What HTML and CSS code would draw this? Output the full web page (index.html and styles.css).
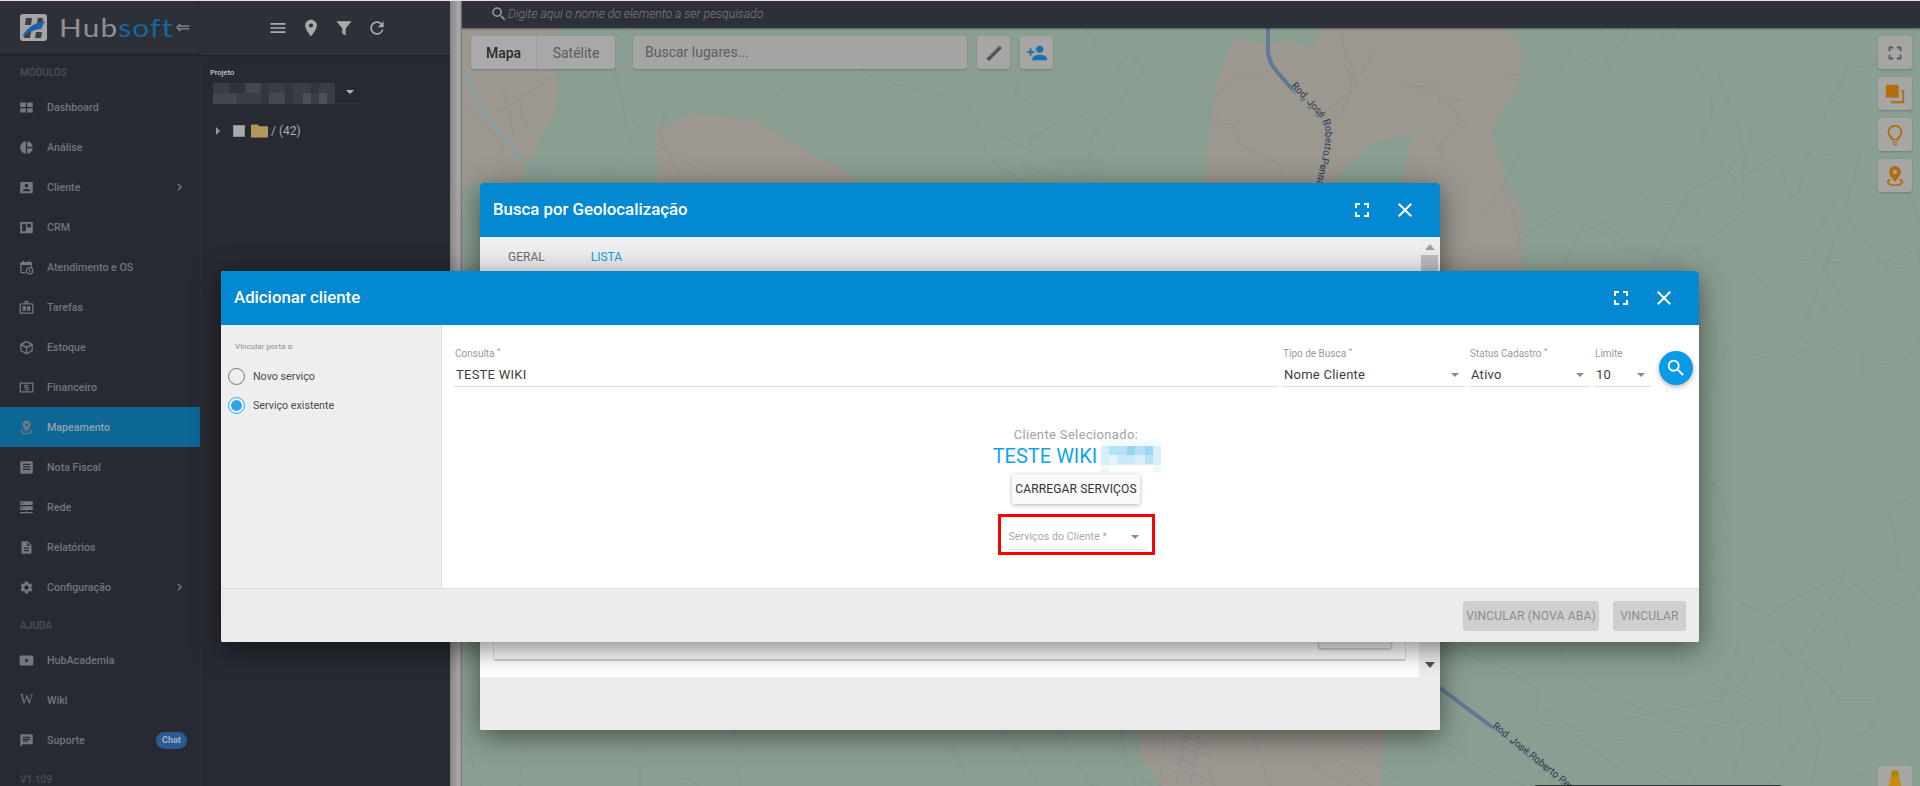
FILE: index.html
```html
<!DOCTYPE html>
<html lang="pt-BR">
<head>
<meta charset="utf-8">
<title>Hubsoft - Mapeamento</title>
<link rel="stylesheet" href="styles.css">
</head>
<body>
<svg class="defs" width="0" height="0" aria-hidden="true">
  <symbol id="i-menu" viewBox="0 0 24 24"><path d="M3 18h18v-2H3v2zm0-5h18v-2H3v2zm0-7v2h18V6H3z"/></symbol>
  <symbol id="i-place" viewBox="0 0 24 24"><path d="M12 2C8.130 2 5 5.130 5 9c0 5.250 7 13 7 13s7-7.750 7-13c0-3.870-3.130-7-7-7zm0 9.500a2.500 2.500 0 0 1 0-5 2.500 2.500 0 0 1 0 5z"/></symbol>
  <symbol id="i-filter" viewBox="0 0 24 24"><path d="M3 4h18l-7 8.500V21l-4-2v-6.500z"/></symbol>
  <symbol id="i-refresh" viewBox="0 0 24 24"><path d="M17.650 6.350A7.958 7.958 0 0 0 12 4c-4.420 0-7.990 3.580-7.990 8s3.570 8 7.990 8c3.730 0 6.840-2.550 7.730-6h-2.080A5.990 5.990 0 0 1 12 18c-3.310 0-6-2.690-6-6s2.690-6 6-6c1.660 0 3.140.69 4.220 1.780L13 11h7V4l-2.350 2.350z"/></symbol>
  <symbol id="i-full" viewBox="0 0 24 24"><path d="M7 14H5v5h5v-2H7v-3zm-2-4h2V7h3V5H5v5zm12 7h-3v2h5v-5h-2v3zM14 5v2h3v3h2V5h-5z"/></symbol>
  <symbol id="i-close" viewBox="0 0 24 24"><path d="M19 6.410 17.590 5 12 10.590 6.410 5 5 6.410 10.590 12 5 17.590 6.410 19 12 13.410 17.590 19 19 17.590 13.410 12z"/></symbol>
  <symbol id="i-search" viewBox="0 0 24 24"><path d="M15.500 14h-.79l-.28-.27A6.470 6.470 0 0 0 16 9.500 6.500 6.500 0 1 0 9.500 16c1.610 0 3.090-.59 4.230-1.570l.27.28v.79l5 4.990L20.490 19l-4.990-5zm-6 0C7.010 14 5 11.990 5 9.500S7.010 5 9.500 5 14 7.010 14 9.500 11.990 14 9.500 14z"/></symbol>
  <symbol id="i-person" viewBox="0 0 24 24"><path d="M15 12c2.210 0 4-1.790 4-4s-1.790-4-4-4-4 1.790-4 4 1.790 4 4 4zm-9-2V7H4v3H1v2h3v3h2v-3h3v-2H6zm9 4c-2.670 0-8 1.340-8 4v2h16v-2c0-2.660-5.330-4-8-4z"/></symbol>
  <symbol id="i-dash" viewBox="0 0 24 24"><path d="M2 4h9v7H2zM13 4h9v7h-9zM2 13h9v7H2zM13 13h9v7h-9z"/></symbol>
  <symbol id="i-pie" viewBox="0 0 24 24"><path d="M11 2v20c-5.070-.5-9-4.790-9-10s3.930-9.500 9-10zm2.030 0v8.990H22c-.47-4.740-4.240-8.520-8.970-8.990zm0 11.010V22c4.740-.47 8.500-4.250 8.970-8.990h-8.970z"/></symbol>
  <symbol id="i-client" viewBox="0 0 24 24"><path d="M2 4.500A1.500 1.500 0 0 1 3.500 3h17A1.500 1.500 0 0 1 22 4.500v15a1.500 1.500 0 0 1-1.500 1.500h-17A1.500 1.500 0 0 1 2 19.500zM15 9a3 3 0 1 0-6 0 3 3 0 0 0 6 0zM6 17v1h12v-1c0-2-4-3.100-6-3.100S6 15 6 17z" fill-rule="evenodd"/></symbol>
  <symbol id="i-crm" viewBox="0 0 24 24"><path d="M2 3h20v18H2zM5 6v12h6V6zm8 0v6h6V6z" fill-rule="evenodd"/></symbol>
  <symbol id="i-cal" viewBox="0 0 24 24"><path d="M6 1h2v2h7V1h2v2h2a2 2 0 0 1 2 2v6h-2V8H4v11h6v2H4a2 2 0 0 1-2-2V5a2 2 0 0 1 2-2h2zM17 11a6 6 0 1 1 0 12 6 6 0 0 1 0-12zm0 2a4 4 0 1 0 0 8 4 4 0 0 0 0-8zm-1 1h1.500v3l2.500 1.500-.7 1.100L16 18z" fill-rule="evenodd"/></symbol>
  <symbol id="i-task" viewBox="0 0 24 24"><path d="M9 1h6v4h6a2 2 0 0 1 2 2v13a2 2 0 0 1-2 2H3a2 2 0 0 1-2-2V7a2 2 0 0 1 2-2h6zm2 2v2h2V3zM3 7v13h18V7zm3 3h5v7H6zm7 0h5v7h-5z" fill-rule="evenodd"/></symbol>
  <symbol id="i-box" viewBox="0 0 24 24"><path d="M12 1l10 5.500v11L12 23 2 17.500v-11zM6 7l6 3.300L18 7l-6-3.300zm-2 2v7.300l7 3.900v-7.400zm9 3.800v7.400l7-3.900V9z" fill-rule="evenodd"/></symbol>
  <symbol id="i-money" viewBox="0 0 24 24"><path d="M1 4h22v16H1zM3 6v12h18V6z" fill-rule="evenodd"/><path d="M15 8.500H9.500v3.500h5v3.500H9" fill="none" stroke="currentColor" stroke-width="1.800"/></symbol>
  <symbol id="i-pin" viewBox="0 0 24 24"><path d="M12 1a6.500 6.500 0 0 0-6.500 6.500C5.500 12 12 18 12 18s6.500-6 6.500-10.500A6.500 6.500 0 0 0 12 1zm0 4.500a2.300 2.300 0 1 1 0 4.600 2.300 2.300 0 0 1 0-4.600z" fill-rule="evenodd"/><path d="M6.500 15C4.400 15.800 3 17 3 18.500 3 21 7 23 12 23s9-2 9-4.500c0-1.500-1.400-2.700-3.500-3.500l-1 1.500c1.400.6 2.300 1.300 2.300 2 0 1.300-3.300 2.700-6.800 2.700s-6.800-1.400-6.800-2.700c0-.7.9-1.400 2.300-2z"/></symbol>
  <symbol id="i-note" viewBox="0 0 24 24"><path d="M20 2H4a2 2 0 0 0-2 2v16a2 2 0 0 0 2 2h16a2 2 0 0 0 2-2V4a2 2 0 0 0-2-2zM6 6h12v2H6zm0 4h12v2H6zm0 4h12v2H6z" fill-rule="evenodd"/></symbol>
  <symbol id="i-net" viewBox="0 0 24 24"><path d="M2 2h20v6H2zm2 2v2h2V4zM2 10h20v6H2zm2 2v2h2v-2zM11 17h2v2h9v2H2v-2h9z" fill-rule="evenodd"/></symbol>
  <symbol id="i-doc" viewBox="0 0 24 24"><path d="M14 2H6c-1.100 0-2 .9-2 2v16c0 1.100.9 2 2 2h12c1.100 0 2-.9 2-2V8l-6-6zm2 16H8v-2h8v2zm0-4H8v-2h8v2zm-3-5V3.500L18.500 9H13z"/></symbol>
  <symbol id="i-gear" viewBox="0 0 24 24"><path d="M19.140 12.940c.04-.3.06-.61.06-.94 0-.32-.02-.64-.07-.94l2.030-1.580a.49.49 0 0 0 .12-.61l-1.920-3.320a.488.488 0 0 0-.59-.22l-2.390.96c-.5-.38-1.030-.7-1.620-.94l-.36-2.540a.484.484 0 0 0-.48-.41h-3.840c-.24 0-.43.17-.47.41l-.36 2.540c-.59.24-1.130.57-1.620.94l-2.390-.96c-.22-.08-.47 0-.59.22L2.740 8.870c-.12.21-.08.47.12.61l2.030 1.580c-.05.3-.09.63-.09.94s.02.64.07.94l-2.030 1.580a.49.49 0 0 0-.12.61l1.920 3.320c.12.22.37.29.59.22l2.390-.96c.5.38 1.030.7 1.620.94l.36 2.540c.05.24.24.41.48.41h3.840c.24 0 .44-.17.47-.41l.36-2.540c.59-.24 1.130-.56 1.620-.94l2.390.96c.22.08.47 0 .59-.22l1.920-3.320c.12-.22.07-.47-.12-.61l-2.010-1.580zM12 15.600c-1.980 0-3.600-1.620-3.600-3.600s1.620-3.600 3.600-3.600 3.600 1.620 3.600 3.600-1.620 3.600-3.600 3.600z"/></symbol>
  <symbol id="i-yt" viewBox="0 0 24 24"><path d="M4 4h16a3 3 0 0 1 3 3v10a3 3 0 0 1-3 3H4a3 3 0 0 1-3-3V7a3 3 0 0 1 3-3zm6 4.500v7l6-3.500z" fill-rule="evenodd"/></symbol>
  <symbol id="i-chat" viewBox="0 0 24 24"><path d="M20 2H4c-1.100 0-1.990.9-1.990 2L2 22l4-4h14c1.100 0 2-.9 2-2V4c0-1.100-.9-2-2-2zM6 9h12v2H6V9zm8 5H6v-2h8v2zm4-6H6V6h12v2z"/></symbol>
  <symbol id="i-chev" viewBox="0 0 24 24"><path d="M9 5.500 15.500 12 9 18.500l-1.600-1.600 4.900-4.900-4.900-4.900z"/></symbol>
  <symbol id="i-ruler" viewBox="0 0 24 24"><path d="M3 18.500 18.500 3l3 3L6 21.500z"/><path d="M7.500 14l2 2M10 11.500l1.300 1.300M12.500 9l2 2M15 6.500l1.300 1.300M17.500 4l2 2M5 16.500l1.300 1.300" fill="none" stroke="#a6a6a5" stroke-width="1"/></symbol>
  <symbol id="i-layers" viewBox="0 0 24 24"><path d="M2 2h14v14H2z"/><path d="M19 8h3v14H8v-3h2v1h10V10h-1z"/></symbol>
  <symbol id="i-bulb" viewBox="0 0 24 24"><path d="M12 1a8 8 0 0 0-5 14.200c1 .9 1.500 1.800 1.500 2.800h7c0-1 .5-1.900 1.500-2.800A8 8 0 0 0 12 1zm0 2a6 6 0 0 1 3.700 10.700c-1 .8-1.700 1.500-2 2.300h-3.400c-.3-.8-1-1.500-2-2.300A6 6 0 0 1 12 3zM9 19.500h6V21H9zM10 22h4v1.500h-4z" fill-rule="evenodd"/></symbol>
</svg>

<div class="app">
  <aside class="sidebar">
    <div class="brand">
      <svg class="brand-mark" viewBox="0 0 27 27" aria-hidden="true">
        <rect width="27" height="27" rx="3" fill="#a5a5a5"/>
        <path d="M6 4h6l-1 7H5zM16 18h6l-1 6h-6zM18 4h5l-1 6h-5zM5 18h6l-1 6H4z" fill="#3a3d44"/>
        <path d="M2 23C6 15 13 9 25 7c-2 4-3 6-4 8-5 0-12 3-19 8z" fill="#1c5fa8"/>
      </svg>
      <span class="brand-name">Hub<b>soft</b></span>
      <svg class="brand-back" viewBox="0 0 16 10" aria-hidden="true"><path d="M5 1 1 5l4 4M2 3.500h13M2 6.500h13" fill="none" stroke="currentColor" stroke-width="1.300"/></svg>
    </div>
    <div class="nav-label">MÓDULOS</div>
    <nav class="nav">
      <a class="nav-item"><svg class="nav-icon"><use href="#i-dash"/></svg><span>Dashboard</span></a>
      <a class="nav-item"><svg class="nav-icon"><use href="#i-pie"/></svg><span>Análise</span></a>
      <a class="nav-item"><svg class="nav-icon"><use href="#i-client"/></svg><span>Cliente</span><svg class="nav-chev"><use href="#i-chev"/></svg></a>
      <a class="nav-item"><svg class="nav-icon"><use href="#i-crm"/></svg><span>CRM</span></a>
      <a class="nav-item"><svg class="nav-icon"><use href="#i-cal"/></svg><span>Atendimento e OS</span></a>
      <a class="nav-item"><svg class="nav-icon"><use href="#i-task"/></svg><span>Tarefas</span></a>
      <a class="nav-item"><svg class="nav-icon"><use href="#i-box"/></svg><span>Estoque</span></a>
      <a class="nav-item"><svg class="nav-icon"><use href="#i-money"/></svg><span>Financeiro</span></a>
      <a class="nav-item is-active"><svg class="nav-icon"><use href="#i-pin"/></svg><span>Mapeamento</span></a>
      <a class="nav-item"><svg class="nav-icon"><use href="#i-note"/></svg><span>Nota Fiscal</span></a>
      <a class="nav-item"><svg class="nav-icon"><use href="#i-net"/></svg><span>Rede</span></a>
      <a class="nav-item"><svg class="nav-icon"><use href="#i-doc"/></svg><span>Relatórios</span></a>
      <a class="nav-item"><svg class="nav-icon"><use href="#i-gear"/></svg><span>Configuração</span><svg class="nav-chev"><use href="#i-chev"/></svg></a>
    </nav>
    <div class="nav-label">AJUDA</div>
    <nav class="nav">
      <a class="nav-item"><svg class="nav-icon"><use href="#i-yt"/></svg><span>HubAcademia</span></a>
      <a class="nav-item"><span class="nav-w">W</span><span>Wiki</span></a>
      <a class="nav-item"><svg class="nav-icon"><use href="#i-chat"/></svg><span>Suporte</span><em class="chat-badge">Chat</em></a>
    </nav>
    <div class="version">V1.109</div>
  </aside>

  <section class="panel">
    <div class="panel-tools">
      <svg class="tool"><use href="#i-menu"/></svg>
      <svg class="tool"><use href="#i-place"/></svg>
      <svg class="tool"><use href="#i-filter"/></svg>
      <svg class="tool"><use href="#i-refresh"/></svg>
    </div>
    <div class="panel-body">
      <label class="project-label">Projeto</label>
      <div class="project-select">
        <svg class="mosaic" width="122" height="21" viewBox="0 0 122 21" aria-hidden="true">
          <rect width="122" height="21" fill="#3a3d45"/>
          <rect x="16" width="16" height="10" fill="#2f323a"/><rect x="32" width="16" height="10" fill="#44474e"/><rect x="0" y="10" width="24" height="11" fill="#43464d"/><rect x="56" y="10" width="16" height="11" fill="#45484f"/><rect x="48" y="0" width="8" height="21" fill="#33363e"/><rect x="72" y="0" width="8" height="21" fill="#32353d"/><rect x="90" y="10" width="8" height="11" fill="#4c4f55"/><rect x="106" y="10" width="8" height="11" fill="#4d5056"/><rect x="98" y="0" width="8" height="10" fill="#33363e"/>
        </svg>
        <i class="caret caret-light"></i>
      </div>
      <div class="tree">
        <span class="tree-joint"></span>
        <span class="tree-check"></span>
        <svg class="tree-folder" viewBox="0 0 18 14" aria-hidden="true"><path d="M1 0h6l2 2h8a1 1 0 0 1 1 1v10a1 1 0 0 1-1 1H1a1 1 0 0 1-1-1V1a1 1 0 0 1 1-1z" fill="#b1995a"/></svg>
        <span class="tree-text">/ (42)</span>
      </div>
    </div>
  </section>

  <div class="gutter"></div>

  <main class="workspace">
    <header class="topsearch">
      <svg class="topsearch-icon" viewBox="0 0 24 24" aria-hidden="true"><use href="#i-search"/></svg>
      <span>Digite aqui o nome do elemento a ser pesquisado</span>
    </header>
    <div class="map">
      <svg class="map-canvas" viewBox="462 28 1458 758" preserveAspectRatio="none" aria-hidden="true">
        <rect x="462" y="28" width="1458" height="758" fill="#8a9f91"/>
        <g fill="#9c9890">
          <path d="M462 28H560L556 110L529 160L520 183H480L462 190z"/>
          <path d="M689 113 754 120 799 148 848 173 860 190H657L656 133z"/>
          <path d="M1233 38 1267 45 1290 40 1313 48 1320 28H1505L1524 53 1517 87 1491 130 1505 177 1522 217V290H1440V183H1400L1413 135 1370 143 1344 170 1320 200H1203L1215 87z"/>
          <path d="M1139 730H1385L1380 786H1160L1140 755z"/>
        </g>
        <g class="map-lines">
          <path d="M462 100 500 140 505 170 490 183M497 113 525 95 555 75 575 65 600 40 640 28M503 88 515 140M520 105 526 128"/>
          <path d="M610 50 625 115 632 150 600 183M632 120 650 140 700 170 716 183M672 85 660 130 665 150 685 183M790 85 770 100 775 110M800 28 820 55 830 65 900 75 920 95M858 70 900 85 965 100 970 110 990 160 1025 183M940 120 1000 135 1060 165 1090 160M1110 125 1020 100M1025 70 1010 105M1060 120 1030 140 1030 165M1090 155 1100 180M1130 125 1100 165 1090 183"/>
          <path d="M1115 70 1130 52 1143 70 1121 100 1106 118 1090 140 1090 175M1020 165 1060 177 1090 176M1085 28 1100 50"/>
          <path d="M1210 105 1230 80 1245 77 1265 77M1216 115 1222 125 1232 123 1240 145 1280 165 1282 183M1213 123 1220 122"/>
          <path d="M1340 28 1352 90 1340 115 1327 125M1375 50 1352 90 1310 125M1385 70 1400 85 1424 90 1450 100 1460 120 1440 145 1450 183M1400 85 1440 88 1440 103 1460 100M1445 95 1466 125M1430 140 1443 150M1345 65 1356 80 1346 50"/>
          <path d="M1500 75 1560 75 1570 50 1575 45 1590 40 1605 28M1505 180 1520 155 1505 183M1480 215 1505 185 1520 240 1560 210 1600 220 1625 240M1500 270 1520 240 1522 270M1566 55 1610 70 1620 50 1690 57 1712 95 1712 115 1700 140 1735 180 1744 165 1752 130 1740 125 1715 100"/>
          <path d="M1630 28 1600 70M1660 40 1680 30M1715 65 1740 130 1745 210 1710 240 1680 260 1620 250 1610 235 1585 225 1560 270M1745 145 1730 170 1690 190 1650 270M1700 210 1645 200 1636 185M1740 180 1778 153 1813 154 1830 100 1847 70 1900 60M1830 100 1860 90M1775 150 1790 195 1815 210 1835 205 1810 240 1865 345 1860 380M1799 190 1810 150M1840 95 1845 70 1855 60M1880 100 1890 150 1920 220M1825 155 1860 155 1845 210 1800 340M1840 210 1890 270 1920 265 1920 245"/>
          <path d="M1700 300 1715 330 1715 355 1730 350 1780 360 1820 345 1880 365 1905 360 1920 340M1750 270 1770 290 1800 260 1870 265 1920 250M1830 300 1800 340M1700 400 1715 380 1730 340"/>
          <path d="M1700 585 1725 580 1737 600 1770 615 1790 600 1845 575 1860 590 1885 610 1920 590M1700 470 1720 490 1730 530 1700 575M1735 590 1760 640 1745 680 1720 700 1745 735 1730 785M1770 620 1800 680 1820 740 1810 786M1770 640 1785 650 1825 680 1840 700 1880 700 1870 730 1850 740M1845 570 1810 640 1780 680M1700 735 1720 760M1820 595 1850 640 1830 700M1840 590 1900 570 1890 510 1920 490"/>
          <path d="M1440 735 1480 770 1525 786M1450 650 1500 665 1540 690 1535 720 1575 735 1620 770M1560 650 1580 680 1598 690 1690 730 1740 720 1780 730 1780 700M1620 720 1720 700 1735 655 1738 642M1700 680 1755 700M1540 705 1575 730 1620 740 1690 730M1655 770 1680 786M1680 760 1700 786M1610 780 1625 750M1850 770 1880 786M1800 735 1770 786"/>
          <path d="M640 740 640 786M735 730 740 786M700 786 690 780 655 775M525 740 520 786M940 735 965 770 950 740M1005 730 1040 786M1060 730 1090 786 1100 786M1110 745 1150 786M1120 730 1135 786M1165 730 1160 786M1205 730 1213 786M1250 730 1270 786M1310 745 1320 770 1350 786M1330 755 1370 786M1352 740 1400 780M462 730 480 786"/>
        </g>
        <g class="map-grid" transform="translate(1180 735)"><path d="M0 0 28 10M-2 12 26 20M-4 24 24 30M-6 36 24 42M6 -2-4 50M20 0 10 50"/></g>
        <path class="map-river" d="M464 72 484 113 519 157 554 183"/>
        <path class="map-road" d="M1268 28V50Q1268 62 1278 73L1293 90"/>
        <path class="map-road-thin" d="M1293 90 1323 122Q1328 130 1325 150L1318 183"/>
        <path class="map-road" d="M1440 688 1492 727"/>
        <path class="map-road-thin" d="M1492 727 1565 786"/>
        <path id="road-a" fill="none" d="M1291 86 1322 119Q1328 130 1324 150L1316 186"/>
        <path id="road-b" fill="none" d="M1492 727 1570 790"/>
        <text class="map-label"><textPath href="#road-a">Rod. José Roberto Penna</textPath></text>
        <text class="map-label"><textPath href="#road-b">Rod. José Roberto Penna</textPath></text>
      </svg>

      <div class="map-controls">
        <div class="map-type"><button class="map-type-btn is-on">Mapa</button><button class="map-type-btn">Satélite</button></div>
        <div class="map-search">Buscar lugares...</div>
        <button class="map-btn"><svg class="map-ic ic-ruler"><use href="#i-ruler"/></svg></button>
        <button class="map-btn"><svg class="map-ic ic-blue"><use href="#i-person"/></svg></button>
      </div>

      <div class="map-side">
        <button class="map-btn side"><svg class="map-ic ic-gray"><use href="#i-full"/></svg></button>
        <button class="map-btn side"><svg class="map-ic ic-orange"><use href="#i-layers"/></svg></button>
        <button class="map-btn side"><svg class="map-ic ic-orange"><use href="#i-bulb"/></svg></button>
        <button class="map-btn side"><svg class="map-ic ic-orange"><use href="#i-pin"/></svg></button>
      </div>

      <div class="pegman">
        <svg viewBox="0 0 16 20" width="16" height="20" aria-hidden="true"><circle cx="8" cy="4" r="4" fill="#b4820f"/><path d="M3 9a2 2 0 0 1 2-2h6a2 2 0 0 1 2 2l2 11H1z" fill="#c28e16"/></svg>
      </div>
      <div class="map-pill"></div>
    </div>
  </main>

  <div class="modal modal-geo">
    <header class="modal-head">
      <h2>Busca por Geolocalização</h2>
      <svg class="head-ic"><use href="#i-full"/></svg>
      <svg class="head-ic"><use href="#i-close"/></svg>
    </header>
    <div class="geo-body">
      <div class="geo-content">
        <div class="geo-tabs"><span class="geo-tab">GERAL</span><span class="geo-tab is-on">LISTA</span></div>
        <div class="geo-fieldset"><span class="geo-small-btn"></span></div>
      </div>
      <div class="geo-scroll"><i class="sc-up"></i><i class="sc-thumb"></i><i class="sc-down"></i></div>
    </div>
    <div class="geo-foot"></div>
  </div>

  <div class="modal modal-add">
    <header class="modal-head">
      <h2>Adicionar cliente</h2>
      <svg class="head-ic"><use href="#i-full"/></svg>
      <svg class="head-ic"><use href="#i-close"/></svg>
    </header>
    <div class="add-body">
      <aside class="add-side">
        <div class="add-side-title">Vincular porta a:</div>
        <div class="radio"><i class="radio-dot"></i>Novo serviço</div>
        <div class="radio is-on"><i class="radio-dot"></i>Serviço existente</div>
      </aside>
      <div class="add-main">
        <div class="add-fields">
          <div class="field f-consulta"><label>Consulta <sup>*</sup></label><div class="field-value">TESTE WIKI</div></div>
          <div class="field f-tipo"><label>Tipo de Busca <sup>*</sup></label><div class="field-value">Nome Cliente<i class="caret"></i></div></div>
          <div class="field f-status"><label>Status Cadastro <sup>*</sup></label><div class="field-value">Ativo<i class="caret"></i></div></div>
          <div class="field f-limite"><label>Limite</label><div class="field-value">10<i class="caret"></i></div></div>
          <button class="fab"><svg class="fab-icon"><use href="#i-search"/></svg></button>
        </div>
        <div class="selected">
          <div class="selected-label">Cliente Selecionado:</div>
          <div class="selected-name">TESTE WIKI
            <svg class="name-mosaic" width="60" height="33" viewBox="0 0 60 33" aria-hidden="true">
              <rect y="7" width="60" height="19" fill="#d8effb"/><rect x="8" y="7" width="44" height="9" fill="#b3e1f8"/><rect x="26" y="7" width="8" height="9" fill="#95d6f6"/><rect x="44" y="7" width="8" height="9" fill="#98d7f6"/><rect x="8" y="16" width="8" height="9" fill="#e6f5fd"/><rect x="16" y="16" width="18" height="9" fill="#c9e9fa"/><rect x="44" y="16" width="8" height="9" fill="#b6e2f8"/><rect y="0" width="60" height="7" fill="#f4fbfe"/><rect y="26" width="8" height="7" fill="#eef8fd"/><rect x="52" y="26" width="8" height="7" fill="#eef8fd"/>
            </svg>
          </div>
          <button class="load-btn">CARREGAR SERVIÇOS</button>
          <div class="service-box"><div class="service-field">Serviços do Cliente *<i class="caret"></i></div></div>
        </div>
      </div>
    </div>
    <footer class="add-foot">
      <button class="foot-btn foot-wide">VINCULAR (NOVA ABA)</button>
      <button class="foot-btn foot-narrow">VINCULAR</button>
    </footer>
  </div>
</div>
</body>
</html>
```

FILE: styles.css
```css
* { box-sizing: border-box; }
html, body { margin: 0; height: 100%; overflow: hidden; }
body { font-family: Roboto, "Liberation Sans", sans-serif; background: #272a32; }
.defs { position: absolute; }
svg { fill: currentColor; display: block; }

.app { position: relative; display: flex; width: 1920px; height: 786px; overflow: hidden; border-top: 1px solid #f3dfe0; }

/* Sidebar */
.sidebar { width: 200px; flex: none; background: #272a32; display: flex; flex-direction: column; color: #747579; }
.brand { height: 53px; flex: none; display: flex; align-items: center; padding-left: 20px; background: #2d3038; box-shadow: 0 1px 2px rgba(0,0,0,.35); }
.brand-mark { width: 27px; height: 27px; flex: none; }
.brand-name { margin-left: 12px; font: 400 25px/1 Lato, sans-serif; color: #8f9092; letter-spacing: 1px; width: 117px; flex: none; transform: scaleX(1.19); transform-origin: left center; white-space: nowrap; }
.brand-name b { font-weight: 400; color: #136a99; }
.brand-back { width: 14px; height: 9px; margin-left: 0; color: #8d8e91; }
.nav-label { height: 33px; flex: none; padding: 13px 0 0 20px; font-size: 10px; line-height: 12px; font-weight: 500; color: #4c4f55; }
.nav { display: flex; flex-direction: column; }
.nav-item { height: 40px; display: flex; align-items: center; padding-left: 19px; font-size: 10.700px; font-weight: 500; }
.nav-item.is-active { background: #0c6795; color: #93a3ad; }
.nav-icon { width: 15px; height: 15px; margin-right: 13px; flex: none; color: #77787b; }
.nav-w { width: 15px; margin-right: 13px; font: 14px "Liberation Serif", serif; text-align: center; color: #77787b; }
.nav-chev { width: 14px; height: 14px; margin-left: auto; margin-right: 13px; color: #77787b; }
.chat-badge { margin-left: auto; margin-right: 13px; width: 31px; height: 17px; border-radius: 9px; background: #2a5a94; color: #a4b1bf; font-size: 9px; line-height: 17px; font-style: normal; font-weight: 700; text-align: center; }
.version { padding: 14px 0 0 20px; font-size: 10px; font-weight: 500; color: #4c4f55; }

/* Project panel */
.panel { width: 250px; flex: none; background: #272a32; box-shadow: inset 1px 0 0 #2a2d35; color: #a6a7a9; }
.panel-tools { height: 54px; display: flex; align-items: center; justify-content: center; gap: 13px; background: #2d3038; box-shadow: 0 1px 2px rgba(0,0,0,.3); padding-left: 5px; }
.tool { width: 20px; height: 20px; color: #a9aaac; }
.panel-body { padding: 11px 0 0 10px; }
.project-label { display: block; font-size: 7.500px; line-height: 14px; color: #c6c6c6; font-weight: 500; }
.project-select { width: 150px; height: 24px; padding: 3px 0 0 3px; display: flex; border-bottom: 1px solid #2f323a; position: relative; }
.caret { display: inline-block; width: 0; height: 0; border-left: 4px solid transparent; border-right: 4px solid transparent; border-top: 4px solid #8c8c8c; }
.caret-light { margin: 7px 0 0 11px; border-top-color: #b5b5b5; }
.tree { display: flex; align-items: center; margin: 20px 0 0 6px; height: 14px; }
.tree-joint { width: 0; height: 0; border-top: 4px solid transparent; border-bottom: 4px solid transparent; border-left: 4px solid #999; margin-right: 13px; }
.tree-check { width: 12px; height: 12px; background: #aaaaa9; border: 1px solid #8c8c8c; margin-right: 6px; }
.tree-folder { width: 17px; height: 14px; margin-right: 3px; }
.tree-text { font-size: 12px; color: #a9aaac; }

.gutter { width: 12px; flex: none; background: linear-gradient(90deg, #858585, #a9a9a9 70%, #9d9d9d 92%, #555); }

/* Workspace */
.workspace { flex: 1; display: flex; flex-direction: column; min-width: 0; }
.topsearch { height: 27px; flex: none; display: flex; align-items: center; gap: 0; padding: 0 0 2px 28px; background: #2d2f39; color: #7f8084; font-size: 12.200px; font-weight: 300; font-style: italic; box-shadow: 0 1px 2px rgba(0,0,0,.4); position: relative; z-index: 1; }
.topsearch-icon { width: 18px; height: 18px; color: #9b9c9e; }
.map { flex: 1; position: relative; overflow: hidden; }
.map-canvas { position: absolute; inset: 0; width: 100%; height: 100%; }
.map-lines { fill: none; stroke: #828d9a; stroke-width: 1; opacity: .45; }
.map-grid { fill: none; stroke: #8a8e9e; stroke-width: 1; }
.map-river { fill: none; stroke: #74a3b5; stroke-width: 1.500; }
.map-road { fill: none; stroke: #5f7a92; stroke-width: 4; }
.map-road-thin { fill: none; stroke: #6f8499; stroke-width: 3; stroke-dasharray: 4 7; }
.map-label { font: 10px Roboto, sans-serif; fill: #2f3a4a; }

.map-controls { position: absolute; top: 8px; left: 9px; display: flex; align-items: stretch; height: 33px; }
.map-type { display: flex; width: 144px; border-radius: 3px; box-shadow: 0 1px 2px rgba(0,0,0,.2); overflow: hidden; margin-right: 18px; }
.map-type-btn { border: 0; padding: 0; font: 14px Roboto, sans-serif; background: #a8a8a8; color: #5b5b5b; flex: 1; }
.map-type-btn.is-on { flex: 0 0 66px; background: #aaa; color: #2a2a2a; font-weight: 500; border-right: 1px solid #9b9b9b; }
.map-search { width: 334px; border-radius: 3px; background: #a4a4a3; color: #5e5e5e; font-size: 14px; line-height: 32px; padding-left: 12px; margin-right: 10px; box-shadow: 0 1px 2px rgba(0,0,0,.2); }
.map-btn { width: 33px; height: 33px; padding: 0; border: 0; border-radius: 3px; background: #a6a6a5; box-shadow: 0 1px 2px rgba(0,0,0,.2); display: flex; align-items: center; justify-content: center; margin-right: 10px; }
.map-btn.side { width: 34px; margin-right: 0; }
.map-ic { width: 22px; height: 22px; }
.ic-blue { color: #1e6fae; }
.ic-ruler { color: #4e4e4e; width: 20px; height: 20px; }
.ic-gray { color: #5a5a5a; }
.ic-orange { color: #b26d0e; }
.map-side { position: absolute; top: 8px; right: 8px; display: flex; flex-direction: column; gap: 8px; }
.pegman { position: absolute; right: 8px; bottom: 0; width: 34px; height: 20px; background: #a6a6a5; border-radius: 3px 3px 0 0; display: flex; justify-content: center; align-items: flex-start; padding-top: 4px; overflow: hidden; }
.map-pill { position: absolute; left: 1071px; bottom: -10px; width: 250px; height: 11px; background: #2b3a33; border-radius: 4px; }

/* Modals */
.modal { position: absolute; box-shadow: 0 6px 28px rgba(0,0,0,.5); display: flex; flex-direction: column; border-radius: 3px 3px 2px 2px; overflow: hidden; }
.modal-head { height: 54px; flex: none; display: flex; align-items: center; background: #0388d2; color: #fff; padding: 0 23px 0 13px; }
.modal-head h2 { margin: -2px auto 0 0; font-size: 16.800px; font-weight: 500; }
.head-ic { width: 24px; height: 24px; margin-right: 7px; }
.modal-head .head-ic + .head-ic { margin: 0 0 0 12px; }

.modal-geo { left: 480px; top: 182px; width: 960px; height: 547px; background: #ececec; }
.geo-body { height: 440px; flex: none; display: flex; }
.geo-content { flex: 1; background: #fff; display: flex; flex-direction: column; }
.geo-tabs { height: 34px; display: flex; gap: 46px; padding: 13px 0 0 28px; background: #eee; font-size: 12px; color: #6d6d6d; flex: none; }
.geo-tab.is-on { color: #109fe6; }
.geo-fieldset { margin: 0 13px 16px; flex: 1; border: 1px solid #dedede; border-bottom: 2px solid #cfcfcf; border-radius: 3px; position: relative; }
.geo-small-btn { position: absolute; right: 13px; bottom: 10px; width: 74px; height: 30px; border: 1px solid #d0d0d0; border-radius: 3px; background: #f6f6f6; box-shadow: 0 1px 2px rgba(0,0,0,.2); }
.geo-scroll { width: 21px; flex: none; background: #ededed; position: relative; display: flex; flex-direction: column; align-items: center; padding-top: 7px; }
.sc-up { width: 0; height: 0; border-left: 5px solid transparent; border-right: 5px solid transparent; border-bottom: 6px solid #a1a1a1; }
.sc-thumb { width: 17px; height: 100px; background: #bdbdbd; margin-top: 5px; }
.sc-down { position: absolute; bottom: 9px; width: 0; height: 0; border-left: 5px solid transparent; border-right: 5px solid transparent; border-top: 6px solid #505050; }
.geo-foot { flex: 1; background: #ececec; }

.modal-add { left: 221px; top: 270px; width: 1478px; height: 371px; background: #fff; }
.add-body { height: 263px; flex: none; display: flex; }
.add-side { width: 221px; flex: none; background: #eee; border-right: 1px solid #dcdcdc; padding: 15px 0 0 7px; font-size: 10.700px; color: #4a4a4a; }
.add-side-title { font-size: 8.100px; line-height: 12px; color: #8f8f8f; padding-left: 7px; margin-bottom: 16px; }
.radio { display: flex; align-items: center; height: 17px; margin-bottom: 12px; gap: 8px; }
.radio-dot { width: 17px; height: 17px; border: 1px solid #757575; border-radius: 50%; background: transparent; display: block; flex: none; }
.radio.is-on .radio-dot { border-color: #29a8ef; background: radial-gradient(circle, #29a8ef 0 5px, transparent 5.500px); }
.add-main { flex: 1; display: flex; flex-direction: column; padding: 0 0 0 12px; }
.add-fields { display: flex; gap: 4px; height: 70px; flex: none; padding-top: 22px; }
.field label { display: block; height: 15px; font-size: 10px; line-height: 14px; color: #9a9a9a; padding-left: 1px; white-space: nowrap; }
.field sup { font-size: 8px; line-height: 0; }
.field-value { height: 24px; margin-top: 1px; font-size: 13px; line-height: 22px; padding-left: 2px; color: #3d3d3d; border-bottom: 1px solid #dedede; display: flex; align-items: center; justify-content: space-between; padding-right: 6px; letter-spacing: .25px; }
.f-consulta { width: 824px; flex: none; }
.f-tipo { width: 183px; flex: none; }
.f-status { width: 121px; flex: none; }
.f-limite { width: 57px; flex: none; }
.fab { flex: none; width: 34px; height: 34px; margin: 4px 0 0 4px; padding: 6px; border: 0; border-radius: 50%; background: #0a9be6; color: #fff; box-shadow: 0 2px 5px rgba(0,0,0,.3); align-self: flex-start; }
.fab-icon { width: 22px; height: 22px; }
.selected { display: flex; flex-direction: column; align-items: center; margin-left: -6px; width: 1256px; }
.selected-label { margin-top: 32px; font-size: 13px; line-height: 16px; letter-spacing: .35px; color: #a3a3a3; }
.selected-name { height: 33px; display: flex; align-items: center; gap: 4px; font-size: 20px; color: #11a3ec; padding-left: 2px; margin-top: -4px; white-space: nowrap; }
.load-btn { height: 30px; width: 128px; margin-top: 2px; border: 0; padding: 0; border-radius: 3px; background: #fafafa; box-shadow: 0 1px 4px rgba(0,0,0,.3); font: 400 12px Roboto, sans-serif; letter-spacing: .15px; color: #333; }
.service-box { margin-top: 10px; width: 157px; height: 41px; border: 3px solid #f00; padding: 7px 6px 0 7px; }
.service-field { height: 26px; font-size: 10.500px; line-height: 24px; letter-spacing: .1px; color: #a8a8a8; border-bottom: 1px solid #dcdcdc; display: flex; justify-content: space-between; align-items: center; padding-left: 1px; padding-right: 7px; }
.add-foot { height: 54px; flex: none; background: #ececec; border-top: 1px solid #dcdcdc; display: flex; justify-content: flex-end; align-items: center; gap: 14px; padding: 0 13px 0 0; }
.foot-btn { height: 30px; padding: 0; border: 0; border-radius: 3px; background: #cfcfcf; color: #8b8b8b; font: 400 12px Roboto, sans-serif; letter-spacing: .2px; }
.foot-wide { width: 136px; }
.foot-narrow { width: 73px; }
```
